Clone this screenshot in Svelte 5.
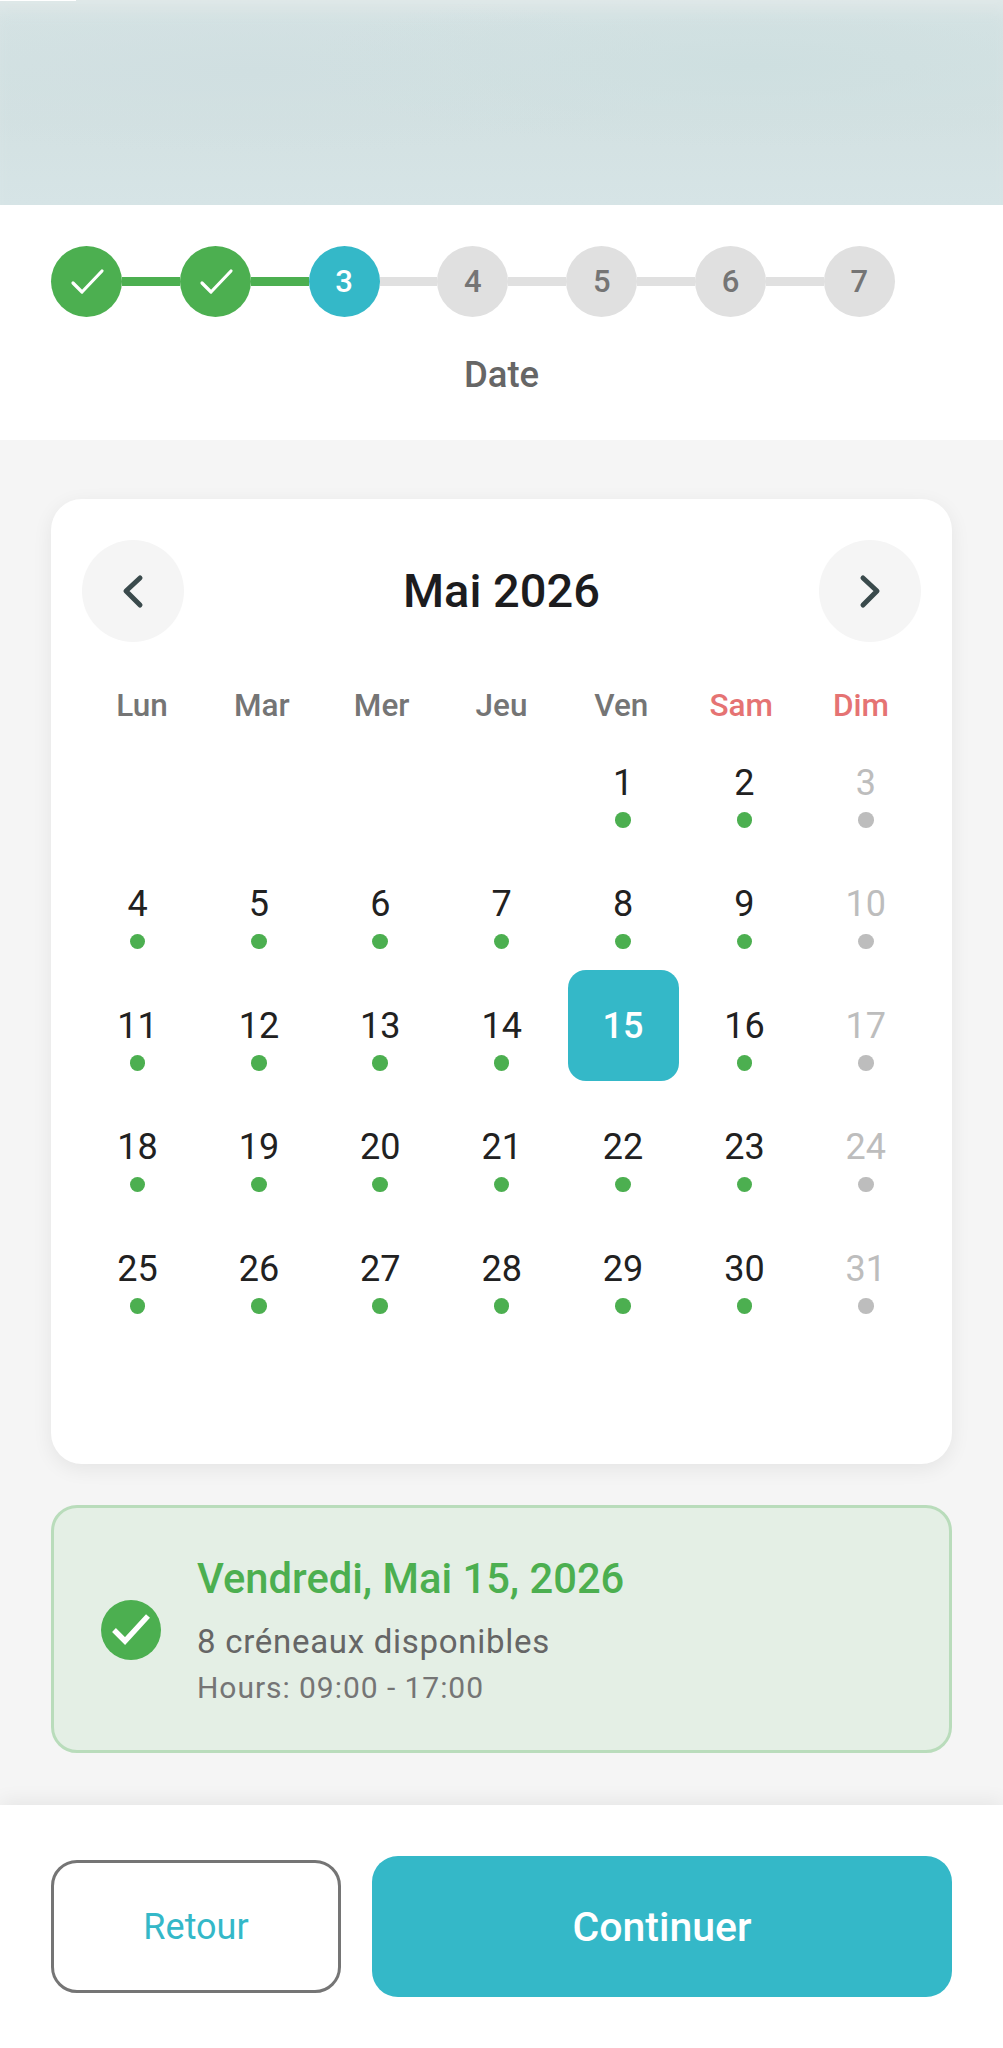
<script lang="ts">
  const steps = [1, 2, 3, 4, 5, 6, 7]
  const current = 3
  const weekdays = ['Lun', 'Mar', 'Mer', 'Jeu', 'Ven', 'Sam', 'Dim']

  // mai 2026 starts on a friday, sundays are closed
  const leading = 4
  const days = Array.from({ length: 31 }, (_, i) => i + 1)
  const selected = 15
  const trailing = 42 - leading - days.length

  function isClosed(day: number) {
    return (day + leading) % 7 === 0
  }
</script>

<div class="page">
  <div class="hero"><div class="sliver"></div></div>

  <section class="progress">
    <div class="steps">
      {#each steps as step, i}
        {#if i > 0}
          <span class="line" class:done={step <= current}></span>
        {/if}
        <span class="step" class:done={step < current} class:active={step === current}>
          {#if step < current}
            <svg viewBox="0 0 71 71" width="71" height="71" aria-hidden="true">
              <polyline points="22,37 31,46 51,25" fill="none" stroke="#fff" stroke-width="3.2" stroke-linecap="round" stroke-linejoin="round" />
            </svg>
          {:else}
            {step}
          {/if}
        </span>
      {/each}
    </div>
    <div class="step-name">Date</div>
  </section>

  <main class="content">
    <section class="calendar">
      <header class="cal-head">
        <button type="button" class="nav" aria-label="Mois précédent">
          <svg viewBox="0 0 102 102" width="102" height="102" aria-hidden="true">
            <polyline points="58,38 44,51 58,65" fill="none" stroke="#3a4a4c" stroke-width="5" stroke-linecap="round" stroke-linejoin="round" />
          </svg>
        </button>
        <h2>Mai 2026</h2>
        <button type="button" class="nav" aria-label="Mois suivant">
          <svg viewBox="0 0 102 102" width="102" height="102" aria-hidden="true">
            <polyline points="44,38 58,51 44,65" fill="none" stroke="#3a4a4c" stroke-width="5" stroke-linecap="round" stroke-linejoin="round" />
          </svg>
        </button>
      </header>

      <div class="weekdays">
        {#each weekdays as name, i}
          <span class:weekend={i > 4}>{name}</span>
        {/each}
      </div>

      <div class="grid">
        {#each Array(leading) as _}
          <span class="cell"></span>
        {/each}
        {#each days as day}
          <span class="cell day" class:closed={isClosed(day)} class:selected={day === selected}>
            {day}
            {#if day !== selected}
              <i class="dot"></i>
            {/if}
          </span>
        {/each}
        {#each Array(trailing) as _}
          <span class="cell"></span>
        {/each}
      </div>
    </section>

    <section class="summary">
      <svg class="summary-icon" viewBox="0 0 60 60" width="60" height="60" aria-hidden="true">
        <circle cx="30" cy="30" r="30" fill="#4caf50" />
        <polyline points="13,30 24,41 47,16" fill="none" stroke="#fff" stroke-width="5.4" />
      </svg>
      <div class="summary-text">
        <div class="summary-title">Vendredi, Mai 15, 2026</div>
        <div class="summary-slots">8 créneaux disponibles</div>
        <div class="summary-hours">Hours: 09:00 - 17:00</div>
      </div>
    </section>
  </main>

  <footer class="actions">
    <button type="button" class="back">Retour</button>
    <button type="button" class="next">Continuer</button>
  </footer>
</div>

<style>
  :global(body) {
    margin: 0;
    background: #f5f5f5;
  }

  .page {
    display: flex;
    flex-direction: column;
    height: 2048px;
    overflow: hidden;
    font-family: Roboto, "Liberation Sans", sans-serif;
    color: #212121;
    background: #f5f5f5;
  }

  .hero {
    position: relative;
    height: 205px;
    flex: none;
    background:
      radial-gradient(ellipse 46% 40% at 75% 32%, #cedfe0, transparent),
      radial-gradient(ellipse 46% 40% at 25% 35%, #d0dfe1, transparent),
      linear-gradient(#d5e3e4 0, #d3e1e2 60%, #d6e4e6 100%);
    box-shadow: inset 0 18px 18px -10px #e1e9e9;
  }

  .sliver {
    position: absolute;
    top: 0;
    left: 0;
    width: 76px;
    height: 1px;
    background: #fff;
  }

  .progress {
    flex: none;
    height: 235px;
    box-sizing: border-box;
    padding: 41px 51px 0;
    background: #fff;
  }

  .steps {
    display: flex;
    align-items: center;
  }

  .step {
    display: flex;
    align-items: center;
    justify-content: center;
    flex: none;
    width: 71px;
    height: 71px;
    border-radius: 50%;
    background: #e0e0e0;
    color: #757575;
    font-size: 31px;
    font-weight: 500;
  }

  .step.done {
    background: #4caf50;
  }

  .step.active {
    background: #34b8c8;
    color: #fff;
  }

  .line {
    flex: none;
    width: 57.8px;
    height: 8.5px;
    background: #e0e0e0;
  }

  .line.done {
    background: #4caf50;
  }

  .step-name {
    margin: 37px -51px 0;
    text-align: center;
    font-size: 36.5px;
    line-height: 42px;
    font-weight: 500;
    color: #666;
  }

  .content {
    flex: 1;
    padding: 59px 51px 0;
    display: flex;
    flex-direction: column;
    gap: 41px;
  }

  .calendar {
    height: 965px;
    box-sizing: border-box;
    padding: 41px 31px 0;
    background: #fff;
    border-radius: 31px;
    box-shadow: 0 5px 20px rgba(0, 0, 0, 0.07);
  }

  .cal-head {
    display: flex;
    align-items: center;
    justify-content: space-between;
  }

  .cal-head h2 {
    margin: 0;
    font-size: 47px;
    line-height: 54px;
    font-weight: 500;
    color: #1c1c1e;
  }

  .nav {
    display: block;
    width: 102px;
    height: 102px;
    padding: 0;
    border: none;
    border-radius: 50%;
    background: #f5f5f5;
  }

  .nav svg {
    display: block;
  }

  .weekdays {
    display: grid;
    grid-template-columns: repeat(7, 1fr);
    margin-top: 44px;
    text-align: center;
    font-size: 31.5px;
    line-height: 40px;
    font-weight: 500;
    color: #757575;
  }

  .weekend {
    color: #e57373;
  }

  .grid {
    display: grid;
    grid-template-columns: repeat(7, 111px);
    grid-auto-rows: 111px;
    gap: 10.4px;
    margin-top: 1px;
  }

  .day {
    position: relative;
    display: flex;
    align-items: center;
    justify-content: center;
    padding-top: 1px;
    font-size: 36px;
    color: #212121;
  }

  .day.closed {
    color: #bdbdbd;
  }

  .day.selected {
    background: #34b8c8;
    border-radius: 18px;
    color: #fff;
    font-weight: 500;
  }

  .dot {
    position: absolute;
    left: 50%;
    bottom: 10px;
    width: 15.6px;
    height: 15.6px;
    margin-left: -7.8px;
    border-radius: 50%;
    background: #4caf50;
  }

  .closed .dot {
    background: #bdbdbd;
  }

  .summary {
    display: flex;
    align-items: center;
    height: 248px;
    box-sizing: border-box;
    padding-left: 47px;
    background: #e4efe5;
    border: 3px solid #b9dcbb;
    border-radius: 26px;
  }

  .summary-icon {
    flex: none;
    margin-top: 2px;
  }

  .summary-text {
    margin-left: 36px;
    margin-top: 3px;
  }

  .summary-title {
    font-size: 41.7px;
    line-height: 46px;
    font-weight: 500;
    color: #4caf50;
  }

  .summary-slots {
    margin-top: 21px;
    font-size: 33px;
    line-height: 38px;
    letter-spacing: 0.72px;
    color: #666;
  }

  .summary-hours {
    margin-top: 10px;
    font-size: 30px;
    line-height: 34px;
    letter-spacing: 0.95px;
    color: #757575;
  }

  .actions {
    flex: none;
    display: flex;
    align-items: center;
    gap: 31px;
    height: 243px;
    box-sizing: border-box;
    padding: 0 51px;
    background: #fff;
    box-shadow: 0 -5px 18px rgba(0, 0, 0, 0.06);
  }

  .actions button {
    font-family: inherit;
    padding: 0;
  }

  .back {
    flex: none;
    width: 290px;
    height: 133px;
    background: #fff;
    border: 3px solid #757575;
    border-radius: 26px;
    color: #34b8c8;
    font-size: 36px;
  }

  .next {
    flex: 1;
    height: 141px;
    background: #34b8c8;
    border: none;
    border-radius: 26px;
    color: #fff;
    font-size: 41px;
    font-weight: 500;
  }
</style>
